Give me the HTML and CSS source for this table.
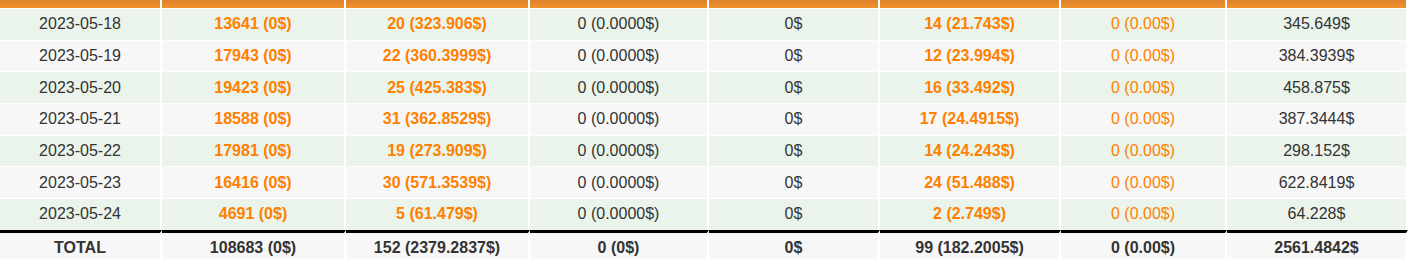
FILE: index.html
```html
<!DOCTYPE html>
<html>
<head>
<meta charset="utf-8">
<link rel="stylesheet" href="styles.css">
</head>
<body>
<table class="stats">
  <colgroup>
    <col class="c0"><col class="c1"><col class="c2"><col class="c3"><col class="c4"><col class="c5"><col class="c6"><col class="c7">
  </colgroup>
  <thead>
    <tr class="head"><th></th><th></th><th></th><th></th><th></th><th></th><th></th><th></th></tr>
  </thead>
  <tbody>
    <tr class="odd"><td>2023-05-18</td><td class="hl">13641 (0$)</td><td class="hl">20 (323.906$)</td><td>0 (0.0000$)</td><td>0$</td><td class="hl">14 (21.743$)</td><td class="lo">0 (0.00$)</td><td>345.649$</td></tr>
    <tr class="even"><td>2023-05-19</td><td class="hl">17943 (0$)</td><td class="hl">22 (360.3999$)</td><td>0 (0.0000$)</td><td>0$</td><td class="hl">12 (23.994$)</td><td class="lo">0 (0.00$)</td><td>384.3939$</td></tr>
    <tr class="odd"><td>2023-05-20</td><td class="hl">19423 (0$)</td><td class="hl">25 (425.383$)</td><td>0 (0.0000$)</td><td>0$</td><td class="hl">16 (33.492$)</td><td class="lo">0 (0.00$)</td><td>458.875$</td></tr>
    <tr class="even"><td>2023-05-21</td><td class="hl">18588 (0$)</td><td class="hl">31 (362.8529$)</td><td>0 (0.0000$)</td><td>0$</td><td class="hl">17 (24.4915$)</td><td class="lo">0 (0.00$)</td><td>387.3444$</td></tr>
    <tr class="odd"><td>2023-05-22</td><td class="hl">17981 (0$)</td><td class="hl">19 (273.909$)</td><td>0 (0.0000$)</td><td>0$</td><td class="hl">14 (24.243$)</td><td class="lo">0 (0.00$)</td><td>298.152$</td></tr>
    <tr class="even"><td>2023-05-23</td><td class="hl">16416 (0$)</td><td class="hl">30 (571.3539$)</td><td>0 (0.0000$)</td><td>0$</td><td class="hl">24 (51.488$)</td><td class="lo">0 (0.00$)</td><td>622.8419$</td></tr>
    <tr class="odd"><td>2023-05-24</td><td class="hl">4691 (0$)</td><td class="hl">5 (61.479$)</td><td>0 (0.0000$)</td><td>0$</td><td class="hl">2 (2.749$)</td><td class="lo">0 (0.00$)</td><td>64.228$</td></tr>
  </tbody>
  <tfoot>
    <tr class="total"><td>TOTAL</td><td>108683 (0$)</td><td>152 (2379.2837$)</td><td>0 (0$)</td><td>0$</td><td>99 (182.2005$)</td><td>0 (0.00$)</td><td>2561.4842$</td></tr>
  </tfoot>
</table>
</body>
</html>
```

FILE: styles.css
```css
html, body {
  margin: 0;
  padding: 0;
  background: #ffffff;
}

.stats {
  border-collapse: separate;
  border-spacing: 0;
  table-layout: fixed;
  width: 1408px;
  font-family: "Liberation Sans", Arial, sans-serif;
  font-size: 16px;
  color: #333333;
}

.c0 { width: 162px; }
.c1 { width: 184px; }
.c2 { width: 184px; }
.c3 { width: 179px; }
.c4 { width: 171px; }
.c5 { width: 181px; }
.c6 { width: 166px; }
.c7 { width: 181px; }

.head th {
  height: 8px;
  padding: 0;
  border-right: 2px solid #ffffff;
  background: linear-gradient(#dc832c, #f0902a);
}

.stats td {
  padding: 0;
  height: 30.67px;
  line-height: 18px;
  text-align: center;
  vertical-align: middle;
  border-top: 1px solid #ffffff;
  border-right: 2px solid #ffffff;
  white-space: nowrap;
}

.odd td { background: #eaf4eb; }
.even td { background: #f7f7f7; }

.stats td.hl {
  color: #ff8000;
  font-weight: bold;
}

.stats td.lo {
  color: #ff8000;
}

.stats .total td {
  height: 22.33px;
  padding-top: 4px;
  background: #f7f7f7;
  border-top: 3px solid #000000;
  font-weight: bold;
  color: #333333;
}
```
